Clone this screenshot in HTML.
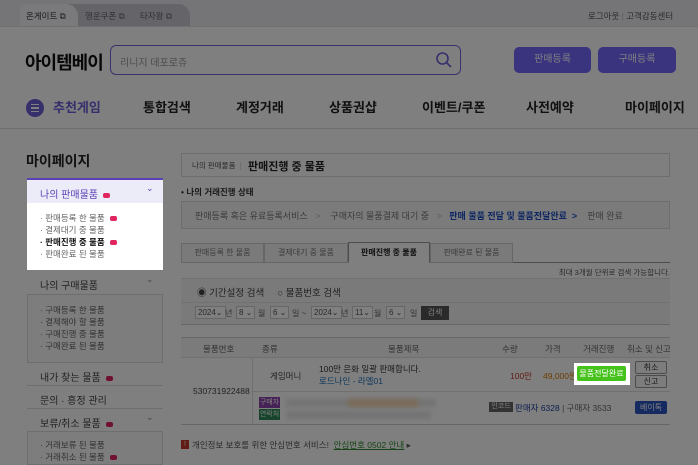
<!DOCTYPE html>
<html><head><meta charset="utf-8"><style>
*{margin:0;padding:0;box-sizing:border-box}
body{width:698px;height:465px;overflow:hidden;background:#fff;font-family:"Liberation Sans","Noto Sans CJK KR",sans-serif;color:#333;position:relative}
.a{position:absolute;white-space:nowrap}
#ov{position:absolute;left:0;top:0;width:698px;height:465px;background:rgba(0,0,0,.5);z-index:10}
.hi{z-index:20}
.sm{font-size:9px;color:#666}
.nav{font-size:13px;font-weight:bold;top:97px;color:#222}
.sb{font-size:10px;color:#444;left:40px}
.si{font-size:8.5px;color:#666;left:40px}
.badge{display:inline-block;width:7px;height:5px;background:#e0245e;border-radius:2px;vertical-align:middle;margin-left:5px}
.sel{border:1px solid #ccc;height:13px;font-size:8px;color:#555;background:#fff;top:306px;padding:1px 2px}
</style></head><body>
<!-- top bar -->
<div class="a" style="left:0;top:0;width:698px;height:26px;background:#eaeaf0"></div>
<div class="a" style="left:20px;top:4px;width:170px;height:22px;background:#c8c8d2;border-radius:8px 12px 0 0"></div>
<div class="a" style="left:20px;top:4px;width:58px;height:22px;background:#f5f5f8;border-radius:8px 12px 0 0"></div>
<div class="a" style="left:26px;top:10px;font-size:8.5px;color:#333">온게이트 ⧉</div>
<div class="a" style="left:85px;top:10px;font-size:8.5px;color:#666">행운쿠폰 ⧉</div>
<div class="a" style="left:140px;top:10px;font-size:8.5px;color:#666">타자왕 ⧉</div>
<div class="a" style="left:588px;top:10px;font-size:8.5px;color:#555">로그아웃 <span style="color:#bbb">|</span> 고객감동센터</div>
<div class="a" style="left:0;top:26px;width:698px;height:1px;background:#e0e0e0"></div>
<!-- header -->
<div class="a" style="left:25px;top:49px;font-size:18px;font-weight:bold;color:#111;letter-spacing:-1px">아이템베이</div>
<div class="a" style="left:110px;top:45px;width:351px;height:30px;border:1.5px solid #7266d8;border-radius:6px"></div>
<div class="a" style="left:120px;top:54px;font-size:10px;color:#999">리니지 데포로쥬</div>
<svg class="a" style="left:435px;top:51px" width="18" height="18" viewBox="0 0 18 18"><circle cx="7.5" cy="7.5" r="5.5" stroke="#6a5fd8" stroke-width="1.6" fill="none"/><path d="M11.5 11.5L16 16" stroke="#6a5fd8" stroke-width="1.6"/></svg>
<div class="a" style="left:514px;top:47px;width:77px;height:26px;background:#7468ff;border-radius:5px;color:#fff;font-size:10px;text-align:center;line-height:26px">판매등록</div>
<div class="a" style="left:598px;top:47px;width:78px;height:26px;background:#7468ff;border-radius:5px;color:#fff;font-size:10px;text-align:center;line-height:26px">구매등록</div>
<!-- nav -->
<div class="a" style="left:26px;top:99px;width:18px;height:18px;border-radius:50%;background:#6a5fd8"></div>
<div class="a" style="left:31px;top:104px;width:8px;height:8px;border-top:1.5px solid #fff;border-bottom:1.5px solid #fff"></div>
<div class="a" style="left:31px;top:107px;width:8px;height:1.5px;background:#fff"></div>
<div class="a nav" style="left:53px;color:#6a5fd8">추천게임</div>
<div class="a nav" style="left:143px">통합검색</div>
<div class="a nav" style="left:236px">계정거래</div>
<div class="a nav" style="left:329px">상품권샵</div>
<div class="a nav" style="left:422px">이벤트/쿠폰</div>
<div class="a nav" style="left:526px">사전예약</div>
<div class="a nav" style="left:625px">마이페이지</div>
<div class="a" style="left:0;top:128px;width:698px;height:1px;background:#ddd"></div>
<!-- sidebar -->
<div class="a" style="left:26px;top:151px;font-size:14px;font-weight:bold;color:#222">마이페이지</div>
<div class="a" style="left:27px;top:270px;width:136px;height:195px;border:1px solid #ddd;background:#fafafa"></div>
<div class="a" style="left:27px;top:270px;width:136px;height:25px;border-bottom:1px solid #ddd;background:#fff"></div>
<div class="a sb" style="top:277px">나의 구매물품</div><div class="a" style="left:146px;top:274px;font-size:9px;color:#888">⌄</div>
<div class="a si" style="top:304px">· 구매등록 한 물품</div>
<div class="a si" style="top:316px">· 결제해야 할 물품</div>
<div class="a si" style="top:328px">· 구매진행 중 물품</div>
<div class="a si" style="top:340px">· 구매완료 된 물품</div>
<div class="a" style="left:27px;top:362px;width:136px;height:70px;background:#fff;border-top:1px solid #ddd"></div>
<div class="a" style="left:27px;top:385px;width:136px;height:1px;background:#ddd"></div>
<div class="a" style="left:27px;top:408px;width:136px;height:1px;background:#ddd"></div>
<div class="a" style="left:27px;top:431px;width:136px;height:1px;background:#ddd"></div>
<div class="a sb" style="top:369px">내가 찾는 물품<span class="badge"></span></div>
<div class="a sb" style="top:392px">문의 · 흥정 관리</div>
<div class="a sb" style="top:415px">보류/취소 물품<span class="badge"></span></div><div class="a" style="left:146px;top:412px;font-size:9px;color:#888">⌄</div>
<div class="a si" style="top:439px">· 거래보류 된 물품</div>
<div class="a si" style="top:451px">· 거래취소 된 물품<span class="badge"></span></div>
<!-- main -->
<div class="a" style="left:181px;top:153px;width:489px;height:24px;border:1px solid #ddd"></div>
<div class="a" style="left:192px;top:160px;font-size:7.5px;color:#555">나의 판매물품 <span style="color:#ccc">&nbsp;|&nbsp;</span></div>
<div class="a" style="left:248px;top:158px;font-size:11px;font-weight:bold;color:#222">판매진행 중 물품</div>
<div class="a" style="left:181px;top:186px;font-size:8.5px;font-weight:bold;color:#333">• 나의 거래진행 상태</div>
<div class="a" style="left:181px;top:201px;width:489px;height:28px;border:1px solid #ddd;background:#f7f7f7"></div>
<div class="a" style="left:195px;top:209px;font-size:9px;color:#777">판매등록 혹은 유료등록서비스 <span style="color:#bbb">&nbsp;&nbsp;&gt;&nbsp;&nbsp;&nbsp;&nbsp;</span>구매자의 물품결제 대기 중 <span style="color:#bbb">&nbsp;&nbsp;&gt;&nbsp;&nbsp;&nbsp;</span><b style="color:#1d4fc7">판매 물품 전달 및 물품전달완료&nbsp;&nbsp;&gt;</b>&nbsp;&nbsp;&nbsp;&nbsp;판매 완료</div>
<div class="a" style="left:181px;top:262px;width:489px;height:1px;background:#999"></div>
<div class="a" style="left:181px;top:243px;width:83px;height:20px;border:1px solid #ccc;background:#f4f4f4;font-size:8px;color:#777;text-align:center;line-height:18px">판매등록 한 물품</div>
<div class="a" style="left:264px;top:243px;width:84px;height:20px;border:1px solid #ccc;background:#f4f4f4;font-size:8px;color:#777;text-align:center;line-height:18px">결제대기 중 물품</div>
<div class="a" style="left:348px;top:242px;width:82px;height:21px;border:1px solid #999;border-bottom:1px solid #fff;background:#fff;font-size:8px;font-weight:bold;color:#222;text-align:center;line-height:19px">판매진행 중 물품</div>
<div class="a" style="left:430px;top:243px;width:83px;height:20px;border:1px solid #ccc;background:#f4f4f4;font-size:8px;color:#777;text-align:center;line-height:18px">판매완료 된 물품</div>
<div class="a" style="right:28px;top:267px;font-size:7.5px;color:#555">최대 3개월 단위로 검색 가능합니다.</div>
<div class="a" style="left:181px;top:278px;width:489px;height:47px;background:#f4f4f4;border-top:1px solid #e2e2e2;border-bottom:1px solid #ccc"></div>
<div class="a" style="left:181px;top:302px;width:489px;height:1px;background:#e2e2e2"></div>
<div class="a" style="left:197px;top:285px;font-size:9.5px;color:#444">◉ 기간설정 검색 &nbsp;&nbsp;&nbsp; ○ 물품번호 검색</div>
<div class="a sel" style="left:195px">2024⌄</div><div class="a sm" style="left:225px;top:308px;font-size:8px">년</div>
<div class="a sel" style="left:236px">8 ⌄</div><div class="a sm" style="left:258px;top:308px;font-size:8px">월</div>
<div class="a sel" style="left:270px">6 ⌄</div><div class="a sm" style="left:292px;top:308px;font-size:8px">일 ~</div>
<div class="a sel" style="left:311px">2024⌄</div><div class="a sm" style="left:341px;top:308px;font-size:8px">년</div>
<div class="a sel" style="left:352px">11⌄</div><div class="a sm" style="left:374px;top:308px;font-size:8px">월</div>
<div class="a sel" style="left:386px">6 ⌄</div><div class="a sm" style="left:410px;top:308px;font-size:8px">일</div>
<div class="a" style="left:421px;top:306px;width:28px;height:14px;background:#555;color:#fff;font-size:8px;text-align:center;line-height:14px">검색</div>
<!-- table -->
<div class="a" style="left:181px;top:337px;width:489px;height:21px;background:#f6f6f6;border-top:1px solid #ccc;border-bottom:1px solid #e0e0e0"></div>
<div class="a sm" style="left:203px;top:343px;font-size:8.5px">물품번호</div>
<div class="a sm" style="left:262px;top:343px;font-size:8.5px">종류</div>
<div class="a sm" style="left:388px;top:343px;font-size:8.5px">물품제목</div>
<div class="a sm" style="left:502px;top:343px;font-size:8.5px">수량</div>
<div class="a sm" style="left:545px;top:343px;font-size:8.5px">가격</div>
<div class="a sm" style="left:583px;top:343px;font-size:8.5px">거래진행</div>
<div class="a sm" style="left:627px;top:343px;font-size:8.5px">취소 및 신고</div>
<div class="a" style="left:252px;top:358px;width:1px;height:67px;background:#e0e0e0"></div>
<div class="a" style="left:252px;top:391px;width:418px;height:1px;background:#e0e0e0"></div>
<div class="a" style="left:181px;top:424px;width:489px;height:1px;background:#ccc"></div>
<div class="a" style="left:193px;top:386px;font-size:8.5px;color:#444">530731922488</div>
<div class="a" style="left:270px;top:370px;font-size:8.5px;color:#444">게임머니</div>
<div class="a" style="left:319px;top:363px;font-size:8.5px;color:#333">100만 은화 일괄 판매합니다.</div>
<div class="a" style="left:319px;top:375px;font-size:8.5px;color:#1d6fb8">로드나인 - 라엘01</div>
<div class="a" style="left:510px;top:370px;font-size:8.5px;color:#c0392b">100만</div>
<div class="a" style="left:543px;top:370px;font-size:8.5px;color:#d97a00">49,000원</div>
<div class="a hi" style="left:574px;top:363px;width:56px;height:22px;background:#fff"></div>
<div class="a hi" style="left:577px;top:366px;width:49px;height:15px;background:#46c21c;border-radius:2px;color:#fff;font-size:8px;text-align:center;line-height:15px">물품전달완료</div>
<div class="a" style="left:635px;top:361px;width:32px;height:13px;border:1px solid #999;border-radius:2px;background:#fafafa;font-size:8px;text-align:center;line-height:11px">취소</div>
<div class="a" style="left:635px;top:375px;width:32px;height:13px;border:1px solid #999;border-radius:2px;background:#fafafa;font-size:8px;text-align:center;line-height:11px">신고</div>
<div class="a" style="left:259px;top:397px;width:21px;height:11px;background:#8e44ad;color:#fff;font-size:7px;text-align:center;line-height:11px">구매자</div>
<div class="a" style="left:259px;top:409px;width:21px;height:11px;background:#2e8b57;color:#fff;font-size:7px;text-align:center;line-height:11px">연락처</div>
<div class="a" style="left:286px;top:399px;width:150px;height:8px;background:#e8e8e8;filter:blur(2px)"></div>
<div class="a" style="left:348px;top:399px;width:70px;height:8px;background:#f5d8b0;filter:blur(2px)"></div>
<div class="a" style="left:286px;top:411px;width:145px;height:8px;background:#e8e8e8;filter:blur(2px)"></div>
<div class="a" style="left:489px;top:402px;width:24px;height:10px;background:#666;color:#fff;font-size:7px;text-align:center;line-height:10px">인코드</div>
<div class="a" style="left:515px;top:402px;font-size:8.5px;color:#1d3f9e">판매자 6328 <span style="color:#666">| 구매자 3533</span></div>
<div class="a" style="left:635px;top:401px;width:32px;height:13px;background:#2d54c4;border-radius:2px;color:#fff;font-size:8px;text-align:center;line-height:13px">베이톡</div>
<div class="a" style="left:181px;top:440px;width:8px;height:9px;background:#c0392b;color:#fff;font-size:7px;text-align:center;line-height:9px">!</div>
<div class="a" style="left:192px;top:439px;font-size:8.5px;color:#555">개인정보 보호를 위한 안심번호 서비스! &nbsp;<u style="color:#2e8b2e">안심번호 0502 안내</u> ▸</div>
<div id="ov"></div>
<!-- highlighted sidebar box -->
<div class="a hi" style="left:27px;top:178px;width:136px;height:92px;background:#fff;border-top:2px solid #5b3fb5"></div>
<div class="a hi" style="left:27px;top:180px;width:136px;height:23px;background:#ececf8"></div>
<div class="a hi" style="left:40px;top:186px;font-size:10px;color:#5b3fb5">나의 판매물품<span class="badge"></span></div>
<div class="a hi" style="left:146px;top:183px;font-size:9px;color:#5b3fb5">⌄</div>
<div class="a hi si" style="top:212px">· 판매등록 한 물품<span class="badge"></span></div>
<div class="a hi si" style="top:224px">· 결제대기 중 물품</div>
<div class="a hi si" style="top:236px;color:#111;font-weight:bold">· 판매진행 중 물품<span class="badge"></span></div>
<div class="a hi si" style="top:248px">· 판매완료 된 물품</div>
</body></html>
